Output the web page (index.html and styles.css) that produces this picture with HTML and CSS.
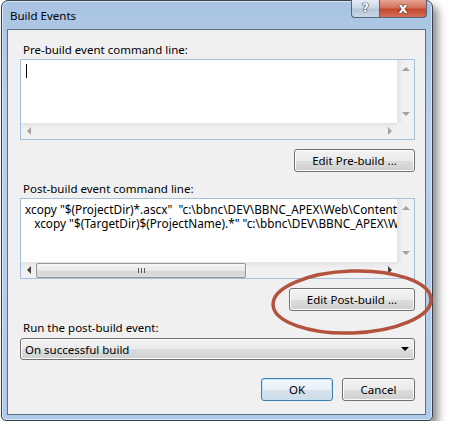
FILE: index.html
```html
<!DOCTYPE html>
<html lang="en">
<head>
    <meta charset="UTF-8">
    <title>Build Events</title>
    <link rel="stylesheet" href="styles.css">
</head>
<body>
    <div class="window">
        <div class="titlebar">
            <span class="title">Build Events</span>
            <div class="caption-buttons">
                <div class="cap-help">?</div>
                <div class="cap-close">x</div>
            </div>
        </div>

        <div class="client">
            <div class="label first">Pre-build event command line:</div>
            <div class="textbox">
                <div class="text"><span class="caret"></span></div>
                <div class="vscroll">
                    <span class="arrow up off"></span>
                    <span class="arrow down off"></span>
                </div>
                <div class="hscroll">
                    <span class="arrow left off"></span>
                    <span class="arrow right off"></span>
                </div>
                <div class="corner"></div>
            </div>
            <div class="button-row">
                <button class="btn btn-pre">Edit Pre-build ...</button>
            </div>

            <div class="label">Post-build event command line:</div>
            <div class="textbox">
                <div class="text">
                    <div class="line">xcopy "$(ProjectDir)*.ascx"  "c:\bbnc\DEV\BBNC_APEX\Web\Content\Controls\" /y</div>
                    <div class="line">   xcopy "$(TargetDir)$(ProjectName).*" "c:\bbnc\DEV\BBNC_APEX\Web\bin\" /y</div>
                </div>
                <div class="vscroll">
                    <span class="arrow up off"></span>
                    <span class="arrow down off"></span>
                </div>
                <div class="hscroll">
                    <span class="arrow left"></span>
                    <div class="thumb"><span class="grip"></span></div>
                    <span class="arrow right"></span>
                </div>
                <div class="corner"></div>
            </div>
            <div class="button-row">
                <button class="btn btn-post">Edit Post-build ...</button>
            </div>

            <div class="label">Run the post-build event:</div>
            <div class="dropdown">
                <span>On successful build</span>
                <span class="drop-arrow"></span>
            </div>

            <div class="button-row footer">
                <button class="btn btn-ok">OK</button>
                <button class="btn btn-cancel">Cancel</button>
            </div>
        </div>

        <!-- callout drawn around the post-build button -->
        <svg class="callout" width="166" height="70" viewBox="0 0 166 70">
            <ellipse cx="83" cy="35" rx="79" ry="31" fill="none" stroke="#b4533d" stroke-width="3.5" transform="rotate(-2 83 35)"/>
        </svg>
    </div>
</body>
</html>
```

FILE: styles.css
```css
body {
    margin: 0;
    background: #ffffff;
    font-family: "Noto Sans", "Open Sans", sans-serif;
    font-size: 11.5px;
    color: #000;
}
.window {
    position: relative;
    margin-left: 1px;
    width: 432px;
    height: 421px;
    border: 1px solid #39424d;
    border-radius: 7px 7px 5px 5px;
    background: linear-gradient(to bottom, #a9c4e2 0%, #b9d1ec 30%, #b0cbe9 100%);
    box-shadow: 5px 6px 8px rgba(0, 0, 0, 0.45), inset 0 0 0 1px #d6e4f4;
    padding: 0 6px 6px 5px;
    box-sizing: border-box;
}
.titlebar {
    height: 28px;
    display: flex;
    justify-content: space-between;
    align-items: flex-start;
}
.title {
    margin: 7px 0 0 3px;
    line-height: 16px;
}
.caption-buttons {
    display: flex;
    margin-top: -1px;
    margin-right: -1px;
}
.cap-help,
.cap-close {
    height: 18px;
    border: 1px solid #56647a;
    border-top: none;
    box-sizing: border-box;
    text-align: center;
    font-family: "DejaVu Sans", sans-serif;
    font-weight: bold;
    color: #fff;
    line-height: 16px;
    text-shadow: 0 0 1px #2a2a2a, 0 0 1px #2a2a2a, 0 0 1px #2a2a2a;
}
.cap-help {
    width: 28px;
    border-radius: 0 0 0 4px;
    border-right: none;
    background: linear-gradient(to bottom, #e3ebf4 0%, #cbd8e6 45%, #b5c6d9 55%, #c9d8e8 100%);
    font-size: 12px;
}
.cap-close {
    width: 48px;
    border-radius: 0 0 4px 0;
    background: linear-gradient(to bottom, #e8a493 0%, #d5735d 45%, #c4472c 55%, #d4705a 100%);
    font-size: 14px;
}
.client {
    height: 386px;
    background: #f0f0f0;
    border: 1px solid #5f6f82;
    box-sizing: border-box;
    padding: 12px 10px 0 12px;
}
.label {
    line-height: 16px;
    margin: 9px 0 0 3px;
}
.label.first {
    margin-top: 0;
}
.textbox {
    margin-top: 1px;
    height: 81px;
    border: 1px solid #a3c0dc;
    background: #fff;
    display: grid;
    grid-template-columns: 1fr 17px;
    grid-template-rows: 1fr 16px;
    box-sizing: border-box;
}
.text {
    padding: 3px 0 0 4px;
    overflow: hidden;
    min-height: 0;
}
.line {
    white-space: pre;
    line-height: 14px;
    font-size: 11.8px;
}
.caret {
    display: block;
    width: 1px;
    height: 14px;
    background: #000;
    margin: 1px 0 0 1px;
}
.vscroll {
    background: linear-gradient(to right, #e4e4e4, #f1f1f1 40%, #f1f1f1);
    display: flex;
    flex-direction: column;
    justify-content: space-between;
    align-items: center;
    padding: 7px 0;
}
.hscroll {
    background: linear-gradient(to bottom, #e4e4e4, #f1f1f1 40%, #f1f1f1);
    display: flex;
    align-items: center;
    padding: 0 5px 0 6px;
    justify-content: space-between;
}
.corner {
    background: #f0f0f0;
}
.arrow {
    width: 0;
    height: 0;
    border: 4px solid transparent;
}
.arrow.up { border-bottom: 4px solid #444; border-top: none; }
.arrow.down { border-top: 4px solid #444; border-bottom: none; }
.arrow.left { border-right: 4px solid #444; border-left: none; }
.arrow.right { border-left: 4px solid #444; border-right: none; }
.arrow.off.up { border-bottom-color: #a3a3a3; }
.arrow.off.down { border-top-color: #a3a3a3; }
.arrow.off.left { border-right-color: #a3a3a3; }
.arrow.off.right { border-left-color: #a3a3a3; }
.thumb {
    width: 210px;
    height: 15px;
    margin-right: auto;
    margin-left: 5px;
    border: 1px solid #979797;
    border-radius: 2px;
    box-sizing: border-box;
    background: linear-gradient(to bottom, #f5f5f5 0%, #e8e8e8 50%, #d6d6d6 51%, #dcdcdc 100%);
    display: flex;
    justify-content: center;
    align-items: center;
}
.grip {
    width: 7px;
    height: 5px;
    background: repeating-linear-gradient(to right, #555 0, #555 1px, transparent 1px, transparent 3px);
}
.button-row {
    display: flex;
    justify-content: flex-end;
    margin-top: 9px;
    gap: 9px;
}
.btn {
    height: 23px;
    font-family: inherit;
    font-size: 11.5px;
    color: #000;
    border: 1px solid #707070;
    border-radius: 3px;
    background: linear-gradient(to bottom, #f2f2f2 0%, #ebebeb 50%, #dddddd 51%, #cfcfcf 100%);
    box-shadow: inset 0 0 0 1px #fcfcfc;
    padding: 0;
}
.btn-pre { width: 121px; }
.btn-post { width: 126px; }
.footer {
    margin-top: 18px;
}
.btn-ok {
    width: 72px;
    border-color: #3c7fb1;
    box-shadow: inset 0 0 0 1px #c6e4f7;
    background: linear-gradient(to bottom, #f1f6fa 0%, #e8f0f6 50%, #d6e3ed 51%, #cddbe6 100%);
}
.btn-cancel { width: 73px; }
.dropdown {
    margin-top: 2px;
    height: 22px;
    border: 1px solid #707070;
    border-radius: 3px;
    box-sizing: border-box;
    background: linear-gradient(to bottom, #f2f2f2 0%, #ebebeb 50%, #dddddd 51%, #cfcfcf 100%);
    box-shadow: inset 0 0 0 1px #fcfcfc;
    display: flex;
    align-items: center;
    justify-content: space-between;
    padding: 0 5px 0 4px;
}
.drop-arrow {
    width: 0;
    height: 0;
    border-left: 4px solid transparent;
    border-right: 4px solid transparent;
    border-top: 4px solid #000;
}
.callout {
    position: absolute;
    left: 267px;
    top: 266px;
}
```
